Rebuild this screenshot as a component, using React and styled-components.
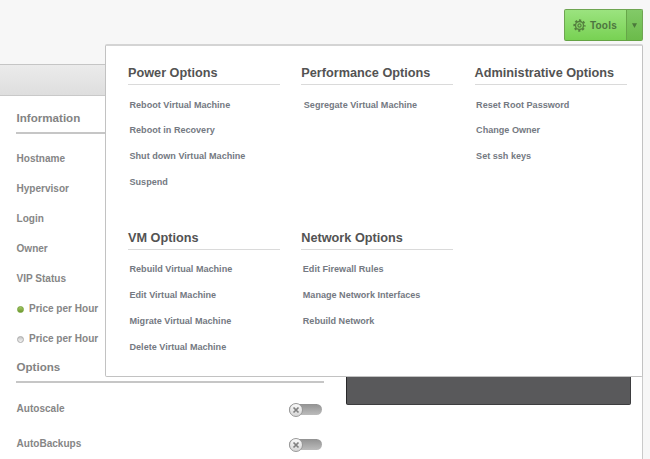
import React from "react";
import styled, { createGlobalStyle } from "styled-components";

const GlobalStyle = createGlobalStyle`
  * { box-sizing: border-box; }
  body {
    margin: 0;
    background: #f7f7f7;
    font-family: "Liberation Sans", Arial, sans-serif;
    font-weight: bold;
    overflow: hidden;
  }
  h2, h3, ul { margin: 0; padding: 0; list-style: none; font-weight: bold; }
`;

const Page = styled.div`
  width: 650px;
  height: 459px;
  display: flex;
  flex-direction: column;
  overflow: hidden;
`;

const Header = styled.header`
  position: relative;
  flex: none;
  height: 64px;
  padding: 9px 7px 0 0;
  display: flex;
  justify-content: flex-end;
  align-items: flex-start;
`;

const ToolsButton = styled.div`
  display: flex;
  width: 79px;
  height: 32px;
  border: 1px solid #6fa552;
  border-bottom-color: #65a344;
  border-radius: 2px;
  background: linear-gradient(#9be37f, #78d153);
  color: #4d7440;
  font-size: 10px;
`;

const ToolsMain = styled.div`
  flex: 1;
  display: flex;
  align-items: center;
  gap: 4px;
  padding-left: 8px;
  letter-spacing: 0.2px;
`;

const ToolsArrow = styled.div`
  width: 16px;
  display: flex;
  align-items: center;
  justify-content: center;
  border-left: 1px solid #67a649;
  background: linear-gradient(#82ca68, #6bbb4a);
`;

const Menu = styled.div`
  position: absolute;
  z-index: 2;
  top: 44px;
  left: 105px;
  width: 538px;
  height: 333px;
  padding: 20px 15px 0 22px;
  display: grid;
  grid-template-columns: repeat(3, 152px);
  grid-template-rows: 164.6px auto;
  column-gap: 21.3px;
  align-content: start;
  background: #fff;
  border: 1px solid #c2c2c2;
  border-top: 2px solid #d4d4d4;
  border-radius: 2px;
`;

const MenuHeading = styled.h3`
  height: 19px;
  line-height: 14px;
  font-size: 12.7px;
  color: #535353;
  border-bottom: 1px solid #dadada;
  white-space: nowrap;
`;

const MenuList = styled.ul`
  padding: 6.6px 0 0 ${(p) => p.$indent || 1.5}px;
`;

const MenuLink = styled.li`
  height: 25.8px;
  line-height: 26px;
  font-size: 9.08px;
  color: #747982;
  white-space: nowrap;
`;

const Panel = styled.main`
  flex: 1;
  width: 643px;
  display: flex;
  flex-direction: column;
  background: #fff;
  border-right: 1px solid #cacaca;
`;

const TitleBar = styled.div`
  flex: none;
  height: 32px;
  border-top: 1px solid #c5c5c5;
  border-bottom: 1px solid #c9c9c9;
  background: linear-gradient(#ebebeb, #dedede);
`;

const Columns = styled.div`
  flex: 1;
  display: flex;
  gap: 22px;
  padding-left: 16px;
`;

const Details = styled.div`
  width: 308px;
  color: #868686;
`;

const SectionHeading = styled.h2`
  height: ${(p) => p.$height}px;
  display: flex;
  align-items: flex-end;
  padding: 0 0 ${(p) => p.$bottom}px 0.5px;
  line-height: 14px;
  font-size: 11.6px;
  color: #838383;
  border-bottom: 2px solid #c6c6c6;
`;

const Fields = styled.div`
  height: ${(p) => p.$height}px;
  padding-top: ${(p) => p.$top}px;
`;

const Field = styled.div`
  height: ${(p) => p.$height}px;
  display: flex;
  align-items: center;
  padding-left: 0.5px;
  font-size: 10.05px;
`;

const Dot = styled.span`
  width: 7px;
  height: 7px;
  margin-right: 5.5px;
  border-radius: 50%;
  border: 1px solid ${(p) => (p.$on ? "#76a23c" : "#ababab")};
  background: ${(p) =>
    p.$on ? "linear-gradient(#a4c766, #6e9a2e)" : "linear-gradient(#c6c6c6, #f6f6f6)"};
  transform: translateY(1px);
`;

const SwitchTrack = styled.span`
  display: flex;
  align-items: center;
  width: 33px;
  height: 11px;
  margin: 2px 2px 0 auto;
  border-radius: 6px;
  background: linear-gradient(#929292, #bcbcbc);
`;

const SwitchKnob = styled.span`
  display: grid;
  place-items: center;
  flex: none;
  width: 14px;
  height: 14px;
  border: 1px solid #999;
  border-radius: 50%;
  background: linear-gradient(#fafafa, #d6d6d6);
`;

const Console = styled.div`
  width: 285px;
  height: 309px;
  background: #59595b;
  border: 1px solid #3d3d3f;
  border-left-color: #28282a;
  border-radius: 2px;
`;

const GearIcon = () => (
  <svg width="13" height="13" viewBox="0 0 13 13" fill="none" stroke="#55803f">
    <circle cx="6.5" cy="6.5" r="5.2" strokeWidth="1.9" strokeDasharray="2.2 1.884" strokeDashoffset="1.1" />
    <circle cx="6.5" cy="6.5" r="4" strokeWidth="1.4" />
    <circle cx="6.5" cy="6.5" r="1.6" strokeWidth="1.2" />
  </svg>
);

const Switch = () => (
  <SwitchTrack>
    <SwitchKnob>
      <svg width="8" height="8" viewBox="0 0 8 8">
        <path d="M1.5 1.5 6.5 6.5M6.5 1.5 1.5 6.5" stroke="#808080" strokeWidth="1.7" />
      </svg>
    </SwitchKnob>
  </SwitchTrack>
);

const groups = [
  {
    title: "Power Options",
    items: [
      "Reboot Virtual Machine",
      "Reboot in Recovery",
      "Shut down Virtual Machine",
      "Suspend",
    ],
  },
  { title: "Performance Options", indent: 2.5, items: ["Segregate Virtual Machine"] },
  {
    title: "Administrative Options",
    items: ["Reset Root Password", "Change Owner", "Set ssh keys"],
  },
  {
    title: "VM Options",
    items: [
      "Rebuild Virtual Machine",
      "Edit Virtual Machine",
      "Migrate Virtual Machine",
      "Delete Virtual Machine",
    ],
  },
  {
    title: "Network Options",
    items: ["Edit Firewall Rules", "Manage Network Interfaces", "Rebuild Network"],
  },
];

const fields = ["Hostname", "Hypervisor", "Login", "Owner", "VIP Status"];

export default function App() {
  return (
    <Page>
      <GlobalStyle />
      <Header>
        <ToolsButton>
          <ToolsMain>
            <GearIcon />
            Tools
          </ToolsMain>
          <ToolsArrow>
            <svg width="5" height="5" viewBox="0 0 5 5">
              <path d="M0 0.3H5L2.5 5Z" fill="#4b793b" />
            </svg>
          </ToolsArrow>
        </ToolsButton>
        <Menu>
          {groups.map((g) => (
            <section key={g.title}>
              <MenuHeading>{g.title}</MenuHeading>
              <MenuList $indent={g.indent}>
                {g.items.map((item) => (
                  <MenuLink key={item}>{item}</MenuLink>
                ))}
              </MenuList>
            </section>
          ))}
        </Menu>
      </Header>
      <Panel>
        <TitleBar />
        <Columns>
          <Details>
            <SectionHeading $height={38} $bottom={7}>Information</SectionHeading>
            <Fields $top={9.2} $height={221}>
              {fields.map((f) => (
                <Field key={f} $height={30.1}>{f}</Field>
              ))}
              <Field $height={30.1}>
                <Dot $on />
                Price per Hour
              </Field>
              <Field $height={30.1}>
                <Dot />
                Price per Hour
              </Field>
            </Fields>
            <SectionHeading $height={28} $bottom={7.5}>Options</SectionHeading>
            <Fields $top={8} $height={78}>
              <Field $height={35}>
                Autoscale
                <Switch />
              </Field>
              <Field $height={35}>
                AutoBackups
                <Switch />
              </Field>
            </Fields>
          </Details>
          <Console />
        </Columns>
      </Panel>
    </Page>
  );
}
